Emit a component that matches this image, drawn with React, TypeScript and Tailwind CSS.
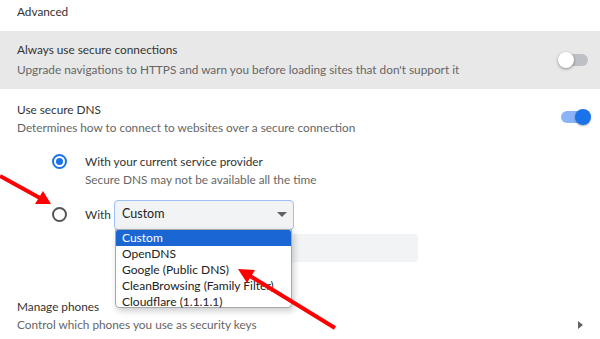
import React from "react";

const font = { fontFamily: 'Lato, "Noto Sans", sans-serif' };

function Toggle({ on }: { on: boolean }) {
  return on ? (
    <div className="relative w-[30px] h-[16px] flex items-center">
      <div className="w-[26px] h-[12px] rounded-full bg-[#8ab4f8]" />
      <div className="absolute right-0 top-0 w-[16px] h-[16px] rounded-full bg-[#1a73e8] shadow-[0_1px_2px_rgba(0,0,0,0.3)]" />
    </div>
  ) : (
    <div className="relative w-[30px] h-[16px] flex items-center justify-end">
      <div className="w-[26px] h-[12px] rounded-full bg-[#bdc1c6]" />
      <div className="absolute left-0 top-0 w-[16px] h-[16px] rounded-full bg-white shadow-[0_1px_3px_rgba(0,0,0,0.4)]" />
    </div>
  );
}

export default function App() {
  return (
    <div
      className="relative w-[600px] h-[339px] overflow-hidden bg-white text-[11.8px] text-[#333]"
      style={font}
    >
      <div className="h-[31px] pl-[17px] pt-[3px] leading-[18px]">Advanced</div>

      <div className="h-[58px] bg-[#e8e8e8] flex items-center justify-between pl-[17px] pr-[12px]">
        <div className="leading-[20px]">
          <div className="text-[#333]">Always use secure connections</div>
          <div className="text-[#666]">
            Upgrade navigations to HTTPS and warn you before loading sites that don't support it
          </div>
        </div>
        <Toggle on={false} />
      </div>

      <div className="h-[48px] flex items-end justify-between pl-[17px] pr-[9px]">
        <div className="leading-[18px]">
          <div>Use secure DNS</div>
          <div className="text-[#666]">Determines how to connect to websites over a secure connection</div>
        </div>
        <div className="mb-[12px]">
          <Toggle on />
        </div>
      </div>

      <div className="h-[61px] flex items-start pl-[52px] pt-[16px]">
        <div className="w-[15px] h-[15px] rounded-full border-2 border-[#1a73e8] flex items-center justify-center mt-[1px]">
          <div className="w-[7px] h-[7px] rounded-full bg-[#1a73e8]" />
        </div>
        <div className="ml-[18px] leading-[18px]">
          <div>With your current service provider</div>
          <div className="text-[#666]">Secure DNS may not be available all the time</div>
        </div>
      </div>

      <div className="h-[33px] flex items-center pl-[52px]">
        <div className="w-[15px] h-[15px] rounded-full border-2 border-[#555]" />
        <div className="ml-[18px] w-[29px]">With</div>
        <div className="w-[180px] h-[30px] rounded-[4px] bg-[#f1f3f4] border border-[#9cc0f5] flex items-center justify-between pl-[7px] pr-[6px] text-[#222] text-[12.5px]">
          <span>Custom</span>
          <svg width="10" height="6" viewBox="0 0 10 6">
            <path d="M0 0 L10 0 L5 5 Z" fill="#5f6368" />
          </svg>
        </div>
      </div>

      <div className="pl-[115px] pt-[3px]">
        <div className="w-[303px] h-[28px] rounded-[4px] bg-[#f1f3f4]" />
      </div>

      <div className="pl-[17px] pt-[36px] leading-[18px] flex items-end justify-between pr-[16px]">
        <div>
          <div>Manage phones</div>
          <div className="text-[#666]">Control which phones you use as security keys</div>
        </div>
        <svg width="6" height="8" viewBox="0 0 6 8" className="mb-[5px]">
          <path d="M0 0 L5 4 L0 8 Z" fill="#5f6368" />
        </svg>
      </div>

      {/* dropdown list overlay */}
      <div className="absolute left-[115px] top-[229px] w-[177px] h-[79px] bg-white border border-[#a8a8a8] rounded-b-[4px] shadow-[2px_3px_6px_rgba(0,0,0,0.2)] text-[#222] text-[12px] leading-[16px] whitespace-nowrap">
        <div className="bg-[#1a66d2] text-white pl-[6px] h-[16px] rounded-t-[2px]">Custom</div>
        <div className="pl-[6px] h-[16px]">OpenDNS</div>
        <div className="pl-[6px] h-[16px]">Google (Public DNS)</div>
        <div className="pl-[6px] h-[16px]">CleanBrowsing (Family Filter)</div>
        <div className="pl-[6px] h-[16px]">Cloudflare (1.1.1.1)</div>
      </div>

      {/* red arrows */}
      <svg className="absolute left-0 top-0 pointer-events-none" width="600" height="339" viewBox="0 0 600 339">
        <line x1="0" y1="176" x2="40" y2="198" stroke="#ff0000" strokeWidth="4" />
        <polygon points="51,204 35,204 43,191" fill="#ff0000" />
        <line x1="335" y1="328" x2="250" y2="276" stroke="#ff0000" strokeWidth="4" />
        <polygon points="238,269 255,270 247,283" fill="#ff0000" />
      </svg>
    </div>
  );
}
